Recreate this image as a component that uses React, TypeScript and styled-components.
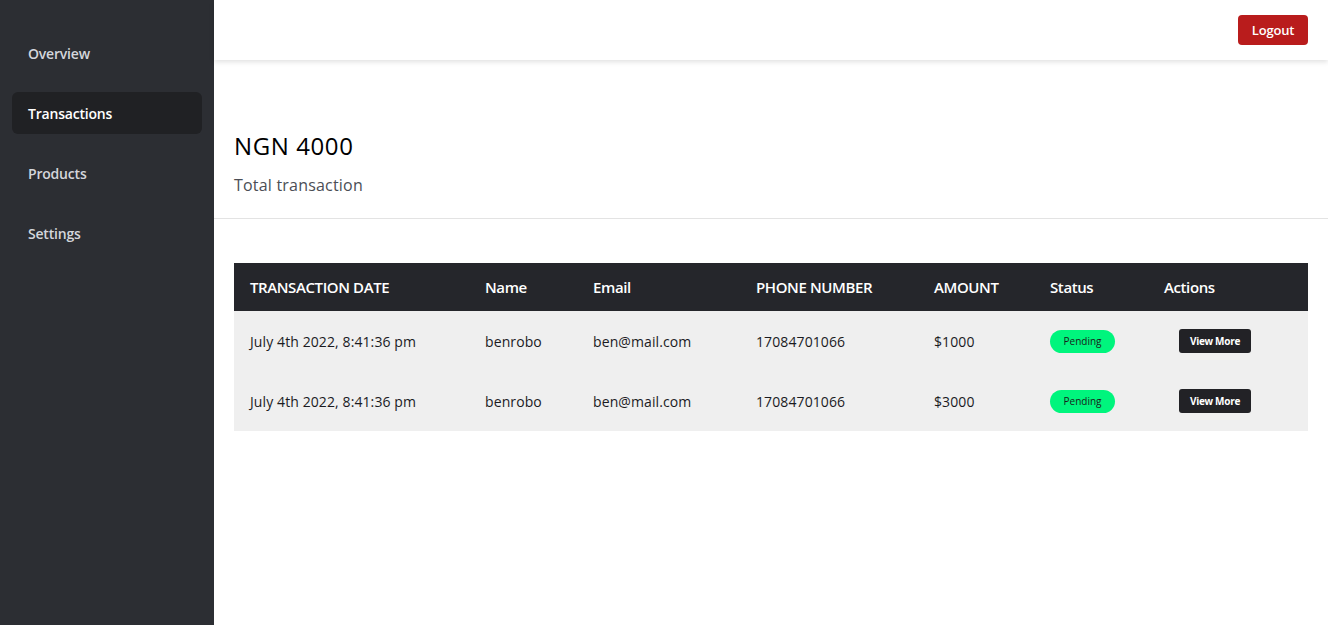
import React from "react";
import styled, { createGlobalStyle } from "styled-components";

const Global = createGlobalStyle`
  * { box-sizing: border-box; }
  html, body { margin: 0; padding: 0; }
  body { font-family: "Open Sans", "Liberation Sans", sans-serif; background: #fff; }
`;

const Layout = styled.div`
  display: flex;
  width: 1328px;
  height: 625px;
  overflow: hidden;
`;

const Sidebar = styled.nav`
  width: 214px;
  flex-shrink: 0;
  background: #2c2e33;
  padding: 32px 12px 0;
  display: flex;
  flex-direction: column;
  gap: 18px;
`;

const NavItem = styled.a<{ $active?: boolean }>`
  display: flex;
  align-items: center;
  height: 42px;
  padding: 0 16px;
  border-radius: 6px;
  font-size: 14px;
  font-weight: 600;
  letter-spacing: -0.2px;
  color: ${(p) => (p.$active ? "#ffffff" : "#d4d6dc")};
  background: ${(p) => (p.$active ? "#202124" : "transparent")};
  text-decoration: none;
  cursor: pointer;
`;

const Main = styled.div`
  flex: 1;
  display: flex;
  flex-direction: column;
`;

const Header = styled.header`
  height: 60px;
  display: flex;
  align-items: center;
  justify-content: flex-end;
  padding: 0 20px;
  background: #fff;
  box-shadow: 0 2px 5px rgba(0, 0, 0, 0.12);
  position: relative;
  z-index: 1;
`;

const LogoutButton = styled.button`
  width: 70px;
  height: 30px;
  border: none;
  border-radius: 4px;
  background: #b91c1c;
  color: #fff;
  font-family: inherit;
  font-size: 13px;
  font-weight: 600;
  letter-spacing: -0.2px;
  cursor: pointer;
`;

const Summary = styled.section`
  padding: 69px 20px 22px;
  border-bottom: 1px solid #e3e3e3;
`;

const Amount = styled.h1`
  margin: 0;
  font-size: 24px;
  font-weight: 400;
  line-height: 34px;
  letter-spacing: 0.6px;
  color: #000;
`;

const Caption = styled.p`
  margin: 11px 0 0;
  font-size: 16px;
  line-height: 22px;
  letter-spacing: 0.2px;
  color: #4b4e55;
`;

const TableWrap = styled.div`
  padding: 44px 20px 0;
`;

const Table = styled.table`
  width: 100%;
  border-collapse: collapse;
  table-layout: fixed;
`;

const Th = styled.th<{ $w: number }>`
  width: ${(p) => p.$w}px;
  height: 48px;
  background: #25262b;
  color: #fff;
  text-align: left;
  padding: 0 16px;
  font-size: 15px;
  font-weight: 600;
  letter-spacing: -0.4px;
`;

const Tr = styled.tr`
  background: #efefef;
`;

const Td = styled.td`
  height: 60px;
  padding: 0 16px;
  font-size: 14px;
  color: #1b1b1f;
  letter-spacing: 0.1px;
`;

const Badge = styled.span`
  display: inline-flex;
  align-items: center;
  justify-content: center;
  width: 65px;
  height: 23px;
  border-radius: 12px;
  background: #00f57d;
  color: #1a1a1a;
  font-size: 10px;
  letter-spacing: 0;
`;

const ViewButton = styled.button`
  margin-left: 15px;
  width: 72px;
  height: 24px;
  border: none;
  border-radius: 3px;
  background: #222226;
  color: #fff;
  font-family: inherit;
  font-size: 10px;
  font-weight: 700;
  letter-spacing: -0.3px;
  cursor: pointer;
`;

const columns = [
  { label: "TRANSACTION DATE", w: 235 },
  { label: "Name", w: 108 },
  { label: "Email", w: 163 },
  { label: "PHONE NUMBER", w: 178 },
  { label: "AMOUNT", w: 116 },
  { label: "Status", w: 114 },
  { label: "Actions", w: 160 },
];

const rows = [
  { date: "July 4th 2022, 8:41:36 pm", name: "benrobo", email: "ben@mail.com", phone: "17084701066", amount: "$1000" },
  { date: "July 4th 2022, 8:41:36 pm", name: "benrobo", email: "ben@mail.com", phone: "17084701066", amount: "$3000" },
];

export default function App() {
  return (
    <>
      <Global />
      <Layout>
        <Sidebar>
          <NavItem>Overview</NavItem>
          <NavItem $active>Transactions</NavItem>
          <NavItem>Products</NavItem>
          <NavItem>Settings</NavItem>
        </Sidebar>
        <Main>
          <Header>
            <LogoutButton>Logout</LogoutButton>
          </Header>
          <Summary>
            <Amount>NGN 4000</Amount>
            <Caption>Total transaction</Caption>
          </Summary>
          <TableWrap>
            <Table>
              <thead>
                <tr>
                  {columns.map((c) => (
                    <Th key={c.label} $w={c.w}>{c.label}</Th>
                  ))}
                </tr>
              </thead>
              <tbody>
                {rows.map((r, i) => (
                  <Tr key={i}>
                    <Td>{r.date}</Td>
                    <Td>{r.name}</Td>
                    <Td>{r.email}</Td>
                    <Td>{r.phone}</Td>
                    <Td>{r.amount}</Td>
                    <Td><Badge>Pending</Badge></Td>
                    <Td><ViewButton>View More</ViewButton></Td>
                  </Tr>
                ))}
              </tbody>
            </Table>
          </TableWrap>
        </Main>
      </Layout>
    </>
  );
}
